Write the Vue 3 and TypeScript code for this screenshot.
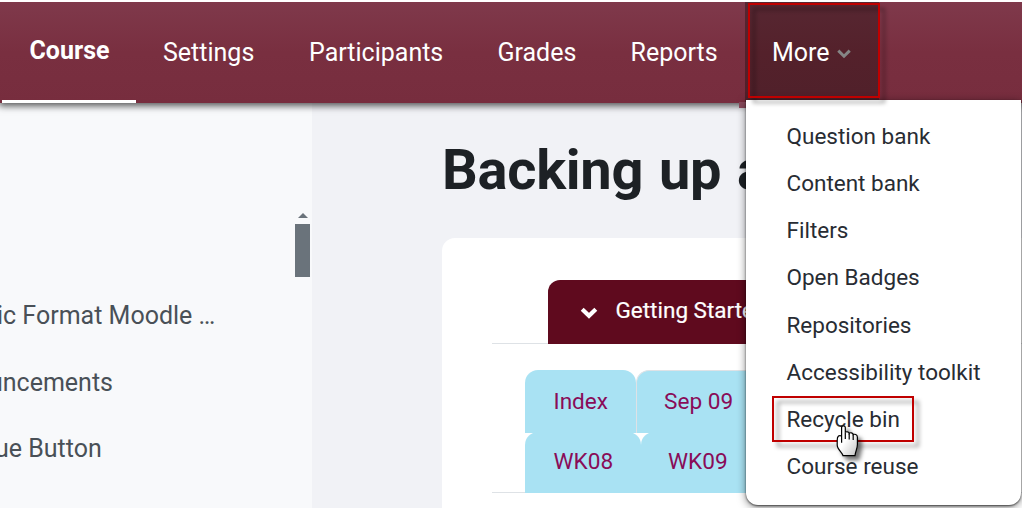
<template>
  <div class="page">
    <header class="topbar">
      <nav class="nav">
        <a v-for="item in navItems" :key="item.label" class="nav-link" :class="[item.name, { active: item.active }]">
          <span class="nav-text">{{ item.label }}</span>
        </a>
        <a class="nav-link more">
          <span class="nav-text">More</span>
          <svg class="more-chevron" viewBox="0 0 14 10">
            <path d="M1.3 1.6 L7 7.2 L12.7 1.6" />
          </svg>
        </a>
      </nav>
    </header>

    <div class="body">
      <aside class="drawer">
        <ul class="course-index">
          <li v-for="entry in courseIndex" :key="entry.label">
            <span class="entry" :class="entry.name">{{ entry.label }}</span>
          </li>
        </ul>
        <div class="scrollbar">
          <svg class="scroll-up" viewBox="0 0 10 5"><path d="M5 0 L10 5 H0 Z" /></svg>
          <div class="scroll-thumb"></div>
        </div>
      </aside>

      <main class="content">
        <h1 class="title"><span>Backing up a</span></h1>
        <section class="card">
          <div class="section-tabs">
            <div class="section-tab">
              <svg class="tab-chevron" viewBox="0 0 18 12">
                <path d="M2.2 2.2 L9 8.8 L15.8 2.2" />
              </svg>
              <span class="tab-text">Getting Started</span>
            </div>
          </div>
          <div class="weeks">
            <div v-for="(row, index) in weekRows" :key="index" class="week-row">
              <a v-for="week in row" :key="week" class="week"><span>{{ week }}</span></a>
            </div>
          </div>
        </section>
      </main>
    </div>

    <div class="menu-corner"></div>
    <div class="menu">
      <a v-for="item in menuItems" :key="item" class="menu-item">
        <span>{{ item }}</span>
      </a>
    </div>
    <div class="mark mark-more"></div>
    <div class="mark mark-recycle"></div>
    <svg class="cursor" viewBox="0 0 24 32">
      <defs>
        <linearGradient id="hand" x1="0" y1="0" x2="1" y2="1">
          <stop offset="0.45" stop-color="#fff" />
          <stop offset="1" stop-color="#c4c4c4" />
        </linearGradient>
      </defs>
      <path
        fill="url(#hand)"
        d="M5.6 17.8 V2.6 C5.6 0.2 9.3 0.2 9.3 2.6 V7.6 C10 6.2 13 6.6 13.2 8.4 C14 7.2 17 7.8 17.2 9.6 C18.4 8.8 21.4 9.4 21.4 12.2 V19.5 C21.4 24 19.5 26 19 30.6 H7 C6.5 27.5 1.2 24.5 1.2 20 V15.2 C1.2 11 3.2 9.8 5.6 11"
      />
      <path class="knuckles" d="M9.3 7.6 V14 M13.2 8.4 V14.5 M17.2 9.6 V15" />
    </svg>
  </div>
</template>

<script setup lang="ts">
interface NavItem {
  label: string;
  name: string;
  active?: boolean;
}

const navItems: NavItem[] = [
  { label: "Course", name: "course", active: true },
  { label: "Settings", name: "settings" },
  { label: "Participants", name: "participants" },
  { label: "Grades", name: "grades" },
  { label: "Reports", name: "reports" },
];

const courseIndex = [
  { label: "ic Format Moodle …", name: "format" },
  { label: "uncements", name: "announcements" },
  { label: "ue Button", name: "button" },
];

const weekRows = [
  ["Index", "Sep 09"],
  ["WK08", "WK09"],
];

const menuItems = [
  "Question bank",
  "Content bank",
  "Filters",
  "Open Badges",
  "Repositories",
  "Accessibility toolkit",
  "Recycle bin",
  "Course reuse",
];
</script>

<style>
body {
  background: #fff;
}
</style>

<style scoped>
.page {
  position: relative;
  display: flex;
  flex-direction: column;
  width: 1022px;
  height: 508px;
  padding-top: 2px;
  box-sizing: border-box;
  overflow: hidden;
  font-family: Roboto, "Liberation Sans", sans-serif;
  font-size: 22.6px;
}
.topbar {
  position: relative;
  z-index: 1;
  flex: none;
  height: 101px;
  background: linear-gradient(#7f394b, #792f40 50%, #772d3e);
  box-shadow: 0 2px 7px 1px rgba(0, 0, 0, 0.65);
  clip-path: inset(0 0 -20px 0);
}
.nav {
  display: flex;
  height: 100%;
  padding-left: 2px;
}
.nav-link {
  box-sizing: border-box;
  flex: none;
  padding: 35px 0 0 27px;
  line-height: 32px;
  font-size: 25px;
  color: #fff;
  white-space: nowrap;
}
.nav-link.course {
  width: 134px;
}
.nav-link.active {
  padding: 33px 0 0 27.5px;
  border-bottom: 3px solid #fff;
  font-weight: 700;
}
.nav-link.settings {
  width: 146px;
}
.nav-link.participants {
  width: 188.5px;
}
.nav-link.grades {
  width: 133px;
}
.nav-link.reports {
  width: 141.5px;
}
.nav-link.more {
  display: flex;
  width: 134px;
  background: linear-gradient(#572732, #54212b 50%, #50202a);
}
.more-chevron {
  width: 14px;
  height: 10px;
  margin: 12px 0 0 7px;
  fill: none;
  stroke: #858585;
  stroke-width: 3;
}
.body {
  display: flex;
  flex: 1;
  min-height: 0;
}
.drawer {
  display: flex;
  flex: none;
  width: 312px;
  background: #f8f9fb;
}
.course-index {
  width: 295px;
  margin: 0;
  padding: 179px 0 0;
  list-style: none;
  color: #495057;
}
.course-index li {
  height: 66.5px;
  line-height: 67px;
  font-size: 25px;
  white-space: nowrap;
}
.entry.format {
  margin-left: -3px;
}
.entry.announcements {
  margin-left: -11px;
}
.entry.button {
  margin-left: -5px;
}
.scrollbar {
  display: flex;
  flex-direction: column;
  align-items: center;
  width: 15px;
  padding-top: 110px;
}
.scroll-up {
  width: 10px;
  height: 5px;
  fill: #6a737b;
}
.scroll-thumb {
  width: 15px;
  height: 53px;
  margin-top: 6px;
  background: #6a737b;
}
.content {
  flex: 1;
  min-width: 0;
  padding-left: 130px;
  background: #f1f2f6;
}
.title {
  height: 64px;
  margin: 35px 0 36px;
  font-size: 56px;
  line-height: 64px;
  font-weight: 700;
  letter-spacing: -0.25px;
  word-spacing: 2px;
  color: #1d2125;
  white-space: nowrap;
}
.card {
  box-sizing: border-box;
  height: 300px;
  padding: 42px 0 0 50px;
  border-top-left-radius: 13px;
  background: #fff;
}
.section-tabs {
  display: flex;
  height: 63px;
  padding-left: 56px;
  border-bottom: 1px solid #dee2e6;
}
.section-tab {
  display: flex;
  box-sizing: border-box;
  width: 400px;
  height: 64px;
  padding-left: 32px;
  border-top-left-radius: 12px;
  background: #5f0a1e;
  color: #fff;
  line-height: 61px;
}
.tab-chevron {
  width: 18px;
  height: 12px;
  margin: 27px 17.5px 0 0;
  fill: none;
  stroke: #fff;
  stroke-width: 4.2;
}
.tab-text {
  font-size: 22.5px;
  -webkit-text-stroke: 0.2px #fff;
}
.weeks {
  height: 122px;
  margin-top: 26px;
  padding-left: 33px;
  border-bottom: 1px solid #dee2e6;
}
.week-row {
  display: flex;
  height: 62px;
}
.week {
  box-sizing: border-box;
  flex: none;
  width: 111px;
  height: 63px;
  padding-left: 28.5px;
  border-radius: 13px 13px 0 0;
  background: #a9e2f3;
  color: #890c58;
  line-height: 63px;
}
.week + .week {
  width: 160px;
  padding-left: 27px;
  border: 1px solid #dee2e6;
  border-bottom: 0;
  line-height: 61px;
}
.week-row + .week-row .week {
  height: 61px;
  width: 116px;
  border: 0;
  line-height: 60px;
}
.menu-corner {
  position: absolute;
  z-index: 2;
  top: 102px;
  left: 739px;
  width: 8px;
  height: 6px;
  background: #87485a;
}
.menu {
  position: absolute;
  z-index: 2;
  top: 100px;
  left: 746px;
  box-sizing: border-box;
  width: 275px;
  height: 405px;
  padding: 12.5px 0 0 40.5px;
  border-radius: 0 0 12px 12px;
  background: #fff;
  box-shadow: 0 1px 2px rgba(0, 0, 0, 0.6), 0 2px 8px rgba(0, 0, 0, 0.5);
}
.menu-item {
  display: block;
  height: 47.25px;
  line-height: 47px;
  font-size: 22.5px;
  color: #282c33;
  white-space: nowrap;
}
.mark {
  position: absolute;
  z-index: 3;
  box-sizing: border-box;
  border: 2px solid #c00000;
  filter: drop-shadow(5px 5px 2px rgba(0, 0, 0, 0.4));
}
.mark-more {
  top: 3px;
  left: 748px;
  width: 132px;
  height: 95px;
}
.mark-recycle {
  top: 396px;
  left: 772px;
  width: 142px;
  height: 46px;
}
.cursor {
  position: absolute;
  z-index: 4;
  top: 425px;
  left: 836px;
  width: 24px;
  height: 32px;
  stroke: #000;
  stroke-width: 1.2;
  filter: drop-shadow(4px 4px 2px rgba(0, 0, 0, 0.55));
}
.knuckles {
  fill: none;
}
</style>
